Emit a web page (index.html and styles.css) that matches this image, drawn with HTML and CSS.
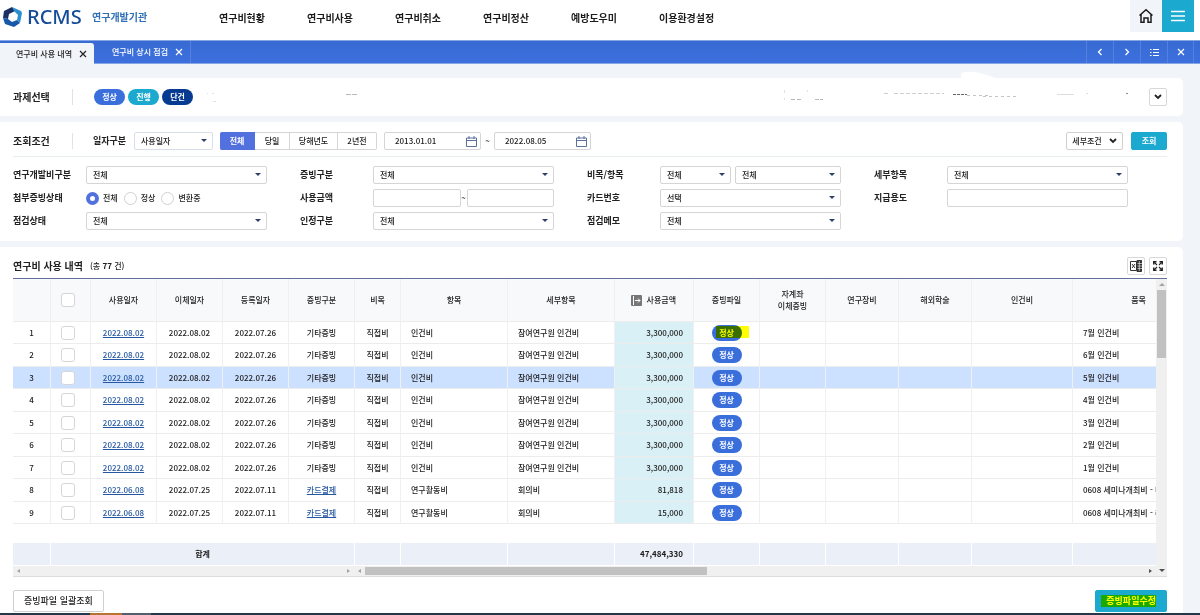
FILE: index.html
```html
<!DOCTYPE html>
<html lang="ko">
<head>
<meta charset="utf-8">
<meta name="viewport" content="width=device-width, initial-scale=1">
<title>RCMS 연구개발기관</title>
<link rel="stylesheet" href="styles.css">
</head>
<body>
<header class="top">
  <a class="brand" href="#">
    <svg class="brand-mark" width="20" height="20" viewBox="0 0 20 20" aria-hidden="true">
      <path fill="#1b2f63" d="M1 4 9 0 12 4 6 7 5 12 0 11z"/>
      <path fill="#2a8fd0" d="M9 0 18 4 19 6 17 16 14 13 15 8 11 4z"/>
      <path fill="#1758a8" d="M0 11 5 12 9 15 14 13 17 16 11 20 2 17z"/>
    </svg>
    <span class="brand-name">RCMS</span>
    <span class="brand-sub">연구개발기관</span>
  </a>
  <nav class="menu">
    <a href="#">연구비현황</a><a href="#">연구비사용</a><a href="#">연구비취소</a><a href="#">연구비정산</a><a href="#">예방도우미</a><a href="#">이용환경설정</a>
  </nav>
  <div class="top-buttons">
    <button class="top-btn" aria-label="홈"><svg width="16" height="16" viewBox="0 0 16 16" fill="none" stroke="#1c1c1c" stroke-width="1.5"><path d="M1.5 7.5 8 1.7l6.500 5.800M3 6.500V14.200h3V10h4v4.200h3V6.500"/></svg></button>
    <button class="top-btn top-btn-menu" aria-label="전체메뉴"><svg width="14" height="12" viewBox="0 0 14 12" stroke="#fff" stroke-width="1.300"><path d="M0 1.500h14M0 6h14M0 10.500h14"/></svg></button>
  </div>
</header>

<div class="tabs">
  <div class="tab tab-on"><a href="#">연구비 사용 내역</a><button aria-label="탭 닫기"><svg width="8" height="8" viewBox="0 0 8 8" stroke="currentColor" stroke-width="1.200"><path d="m1 1 6 6M7 1 1 7"/></svg></button></div>
  <div class="tab"><a href="#">연구비 상시 점검</a><button aria-label="탭 닫기"><svg width="8" height="8" viewBox="0 0 8 8" stroke="currentColor" stroke-width="1.200"><path d="m1 1 6 6M7 1 1 7"/></svg></button></div>
  <div class="tab-tools">
    <button aria-label="이전"><svg width="8" height="8" viewBox="0 0 8 8" fill="none" stroke="currentColor" stroke-width="1.300"><path d="M5.500 1 2.500 4l3 3"/></svg></button>
    <button aria-label="다음"><svg width="8" height="8" viewBox="0 0 8 8" fill="none" stroke="currentColor" stroke-width="1.300"><path d="m2.500 1 3 3-3 3"/></svg></button>
    <button aria-label="목록"><svg width="9" height="8" viewBox="0 0 9 8" stroke="currentColor"><path d="M0 1.500h1.500M0 4.500h1.500M0 7.500h1.500M3 1.500h6M3 4.500h6M3 7.500h6"/></svg></button>
    <button aria-label="모두 닫기"><svg width="8" height="8" viewBox="0 0 8 8" stroke="currentColor" stroke-width="1.200"><path d="m1 1 6 6M7 1 1 7"/></svg></button>
  </div>
</div>

<main class="page">
  <section class="card project">
    <h2 class="heading">과제선택</h2>
    <div class="pills"><span class="pill pill-lg">정상</span><span class="pill pill-lg pill-cyan">진행</span><span class="pill pill-lg pill-navy">단건</span></div>
    <div class="erased">
      <svg width="940" height="40" viewBox="200 77 940 40" fill="none" aria-hidden="true">
        <path fill="#fff" d="M961 80v-6c3-4 17-3 34 4v2z"/>
        <g stroke="#b9b9b9" stroke-width="1">
          <path stroke="#e2e2e2" d="M207 93.500h1m4 0h2M213 101.500h3M784.500 90v3m0 5v2M807.500 90v2"/>
          <path d="M346 94.500h11" stroke-dasharray="5 1"/>
          <path d="M791 99.500h4m2 0h5M815 99.500h8" stroke-dasharray="4 1"/>
          <path stroke="#cfcfcf" d="M884 93.500h6m4 0h50" stroke-dasharray="4 2"/>
          <path stroke="#666" d="M953 94.500h14" stroke-dasharray="3 1"/>
          <path stroke="#c5c5c5" d="M967 95.500h24m-8 1h36" stroke-dasharray="3 3"/>
          <path stroke="#dedede" d="M1057 94.500h17M1086 93.500h2"/>
          <path stroke="#888" d="M1126 93.500h2"/>
        </g>
      </svg>
    </div>
    <button class="icon-btn" aria-label="펼치기"><svg width="8" height="6" viewBox="0 0 8 6" fill="none" stroke="#222" stroke-width="1.800"><path d="m1 1 3 3 3-3"/></svg></button>
  </section>

  <section class="card search">
    <div class="search-head">
      <h2 class="heading">조회조건</h2>
      <label class="label" for="dateType">일자구분</label>
      <span class="select date-type"><select id="dateType"><option>사용일자</option></select></span>
      <div class="segment"><button class="on">전체</button><button>당일</button><button class="wide">당해년도</button><button class="last">2년전</button></div>
      <div class="range">
        <span class="date"><input type="text" value="2013.01.01" aria-label="시작일"><svg width="11" height="11" viewBox="0 0 11 11" fill="none" stroke="#5d7099"><path d="M.5 2h10v8.500H.5zM.5 4.500h10M3 0v3M8 0v3"/></svg></span>
        <span class="tilde">~</span>
        <span class="date"><input type="text" value="2022.08.05" aria-label="종료일"><svg width="11" height="11" viewBox="0 0 11 11" fill="none" stroke="#5d7099"><path d="M.5 2h10v8.500H.5zM.5 4.500h10M3 0v3M8 0v3"/></svg></span>
      </div>
      <div class="search-actions">
        <button class="btn detail">세부조건 <svg width="8" height="6" viewBox="0 0 8 6" fill="none" stroke="#222" stroke-width="1.800"><path d="m1 1 3 3 3-3"/></svg></button>
        <button class="btn btn-cyan query">조회</button>
      </div>
    </div>
    <div class="fields">
      <div class="field"><label class="label" for="f1">연구개발비구분</label><span class="select"><select id="f1"><option>전체</option></select></span></div>
      <div class="field"><label class="label" for="f2">증빙구분</label><span class="select"><select id="f2"><option>전체</option></select></span></div>
      <div class="field"><label class="label" for="f3">비목/항목</label><span class="select bimok"><select id="f3"><option>전체</option></select></span><span class="select"><select aria-label="항목"><option>전체</option></select></span></div>
      <div class="field"><label class="label" for="f4">세부항목</label><span class="select"><select id="f4"><option>전체</option></select></span></div>
      <div class="field" role="radiogroup" aria-labelledby="stLabel"><span class="label" id="stLabel">첨부증빙상태</span>
        <div class="radios"><label><input type="radio" name="st" checked>전체</label><label><input type="radio" name="st">정상</label><label><input type="radio" name="st">변환중</label></div></div>
      <div class="field"><label class="label" for="f5">사용금액</label><input class="text" id="f5" type="text"><span class="between">~</span><input class="text" type="text" aria-label="사용금액 최대"></div>
      <div class="field"><label class="label" for="f6">카드번호</label><span class="select"><select id="f6"><option>선택</option></select></span></div>
      <div class="field"><label class="label" for="f7">지급용도</label><input class="text" id="f7" type="text"></div>
      <div class="field"><label class="label" for="f8">점검상태</label><span class="select"><select id="f8"><option>전체</option></select></span></div>
      <div class="field"><label class="label" for="f9">인정구분</label><span class="select"><select id="f9"><option>전체</option></select></span></div>
      <div class="field"><label class="label" for="f10">점검메모</label><span class="select"><select id="f10"><option>전체</option></select></span></div>
    </div>
  </section>

  <section class="card list">
    <div class="list-head">
      <h2 class="list-title">연구비 사용 내역</h2>
      <span class="count">(총 <b>77</b> 건)</span>
      <div class="list-tools">
        <button class="icon-btn" aria-label="엑셀"><svg width="12" height="12" viewBox="0 0 12 12" fill="none" stroke="#333"><path d="M.5 1.500h6v9h-6zM2 4l3 4M5 4 2 8"/><path fill="#333" d="M7 .5h4.500v11H7z"/><path stroke="#fff" stroke-width=".6" d="M7.500 3.500H12M7.500 6H12M7.500 8.500H12M9.300 1v10"/></svg></button>
        <button class="icon-btn" aria-label="전체화면"><svg width="10" height="10" viewBox="0 0 10 10" fill="none" stroke="#222" stroke-width="1.500"><path d="M.8 3.500V.8h2.700M6.500.8h2.700v2.700M9.200 6.500v2.700H6.500M3.500 9.200H.8V6.500"/><path stroke-width="1.100" d="m1 1 3 3M9 1 6 4M9 9 6 6M1 9l3-3"/></svg></button>
      </div>
    </div>

    <div class="grid">
      <div class="grid-main">
        <div class="grid-view">
          <table>
            <colgroup><col class="c38"><col class="c40"><col class="c66"><col class="c66"><col class="c66"><col class="c66"><col class="c46"><col class="c107"><col class="c107"><col class="c79"><col class="c66"><col class="c66"><col class="c73"><col class="c73"><col class="c101"><col class="c132"></colgroup>
            <thead>
              <tr><th></th><th><input type="checkbox" aria-label="전체 선택"></th><th>사용일자</th><th>이체일자</th><th>등록일자</th><th>증빙구분</th><th>비목</th><th>항목</th><th>세부항목</th><th><span class="amount-head"><svg width="11" height="11" viewBox="0 0 11 11" fill="none"><rect width="11" height="11" rx="1" fill="#777"/><path stroke="#fff" d="M2.500 1v9M4 5.500h5M7 3.500l2 2-2 2"/></svg>사용금액</span></th><th>증빙파일</th><th>자계좌<br>이체증빙</th><th>연구장비</th><th>해외학술</th><th>인건비</th><th>품목</th></tr>
            </thead>
            <tbody>
              <tr><td>1</td><td><input type="checkbox" aria-label="1행 선택"></td><td><a href="#">2022.08.02</a></td><td>2022.08.02</td><td>2022.07.26</td><td>기타증빙</td><td>직접비</td><td class="l">인건비</td><td class="l">참여연구원 인건비</td><td class="amt">3,300,000</td><td><span class="pill marked">정상</span></td><td></td><td></td><td></td><td></td><td class="l">7월 인건비</td></tr>
              <tr><td>2</td><td><input type="checkbox" aria-label="2행 선택"></td><td><a href="#">2022.08.02</a></td><td>2022.08.02</td><td>2022.07.26</td><td>기타증빙</td><td>직접비</td><td class="l">인건비</td><td class="l">참여연구원 인건비</td><td class="amt">3,300,000</td><td><span class="pill">정상</span></td><td></td><td></td><td></td><td></td><td class="l">6월 인건비</td></tr>
              <tr class="selected"><td>3</td><td><input type="checkbox" aria-label="3행 선택"></td><td><a href="#">2022.08.02</a></td><td>2022.08.02</td><td>2022.07.26</td><td>기타증빙</td><td>직접비</td><td class="l">인건비</td><td class="l">참여연구원 인건비</td><td class="amt">3,300,000</td><td><span class="pill">정상</span></td><td></td><td></td><td></td><td></td><td class="l">5월 인건비</td></tr>
              <tr><td>4</td><td><input type="checkbox" aria-label="4행 선택"></td><td><a href="#">2022.08.02</a></td><td>2022.08.02</td><td>2022.07.26</td><td>기타증빙</td><td>직접비</td><td class="l">인건비</td><td class="l">참여연구원 인건비</td><td class="amt">3,300,000</td><td><span class="pill">정상</span></td><td></td><td></td><td></td><td></td><td class="l">4월 인건비</td></tr>
              <tr><td>5</td><td><input type="checkbox" aria-label="5행 선택"></td><td><a href="#">2022.08.02</a></td><td>2022.08.02</td><td>2022.07.26</td><td>기타증빙</td><td>직접비</td><td class="l">인건비</td><td class="l">참여연구원 인건비</td><td class="amt">3,300,000</td><td><span class="pill">정상</span></td><td></td><td></td><td></td><td></td><td class="l">3월 인건비</td></tr>
              <tr><td>6</td><td><input type="checkbox" aria-label="6행 선택"></td><td><a href="#">2022.08.02</a></td><td>2022.08.02</td><td>2022.07.26</td><td>기타증빙</td><td>직접비</td><td class="l">인건비</td><td class="l">참여연구원 인건비</td><td class="amt">3,300,000</td><td><span class="pill">정상</span></td><td></td><td></td><td></td><td></td><td class="l">2월 인건비</td></tr>
              <tr><td>7</td><td><input type="checkbox" aria-label="7행 선택"></td><td><a href="#">2022.08.02</a></td><td>2022.08.02</td><td>2022.07.26</td><td>기타증빙</td><td>직접비</td><td class="l">인건비</td><td class="l">참여연구원 인건비</td><td class="amt">3,300,000</td><td><span class="pill">정상</span></td><td></td><td></td><td></td><td></td><td class="l">1월 인건비</td></tr>
              <tr><td>8</td><td><input type="checkbox" aria-label="8행 선택"></td><td><a href="#">2022.06.08</a></td><td>2022.07.25</td><td>2022.07.11</td><td><a href="#">카드결제</a></td><td>직접비</td><td class="l">연구활동비</td><td class="l">회의비</td><td class="amt">81,818</td><td><span class="pill">정상</span></td><td></td><td></td><td></td><td></td><td class="l">0608 세미나개최비 - 비</td></tr>
              <tr><td>9</td><td><input type="checkbox" aria-label="9행 선택"></td><td><a href="#">2022.06.08</a></td><td>2022.07.25</td><td>2022.07.11</td><td><a href="#">카드결제</a></td><td>직접비</td><td class="l">연구활동비</td><td class="l">회의비</td><td class="amt">15,000</td><td><span class="pill">정상</span></td><td></td><td></td><td></td><td></td><td class="l">0608 세미나개최비 - 라</td></tr>
            </tbody>
            <tfoot>
              <tr class="spacer"><td colspan="16"></td></tr>
              <tr class="total"><td></td><td colspan="5">합계</td><td></td><td></td><td></td><td class="sum">47,484,330</td><td></td><td></td><td></td><td></td><td></td><td></td></tr>
            </tfoot>
          </table>
        </div>
        <div class="hbars">
          <div class="hbar hbar-fixed"><i class="arrow left"></i><i class="arrow right"></i></div>
          <div class="hbar"><i class="arrow left"></i><span class="hthumb"></span><i class="arrow right dark"></i></div>
        </div>
      </div>
      <div class="vbar"><i class="arrow up"></i><span class="vthumb"></span><i class="arrow down dark"></i></div>
    </div>

    <div class="actions">
      <button class="btn action">증빙파일 일괄조회</button>
      <button class="btn btn-cyan action"><span class="marked-text">증빙파일수정</span></button>
    </div>
  </section>
</main>
<div class="taskbar"><span class="task-orange"></span><span class="task-gray"></span></div>
</body>
</html>
```

FILE: styles.css
```css
* { box-sizing: border-box; }

body {
  margin: 0;
  min-height: 100vh;
  display: flex;
  flex-direction: column;
  overflow: hidden;
  background: #f1f5fa;
  color: #222;
  font: 500 8px/12px "Noto Sans CJK KR", sans-serif;
}

a { color: inherit; text-decoration: none; }
svg { display: block; flex: none; }
button, input, select { font: inherit; color: inherit; }
button {
  display: flex;
  align-items: center;
  justify-content: center;
  padding: 0;
  border: 0;
  background: none;
}

/* header */
.top { display: flex; height: 40px; background: #fff; }
.brand { display: flex; align-items: center; width: 219px; height: 34px; padding-left: 3px; }
.brand-name {
  width: 64px;
  padding-left: 4px;
  margin-right: 5px;
  color: #154c98;
  font: 500 20px/28px "Noto Sans", sans-serif;
}
.brand-sub { color: #2f6fb5; font-size: 10px; font-weight: 700; }
.menu { display: flex; gap: 42px; height: 36px; align-items: center; color: #1b1b1b; font-size: 10px; font-weight: 700; }
.top-buttons { display: flex; margin-left: auto; padding-right: 6px; }
.top-btn { width: 32px; height: 32px; background: #f1f5fa; }
.top-btn-menu { background: #1ba9cf; }

/* tabs */
.tabs {
  display: flex;
  align-items: flex-end;
  height: 24px;
  border-top: 1px solid #86a5e4;
  border-bottom: 1px solid #86a5e4;
  background: linear-gradient(#376bd2, #3d70de);
  color: #fff;
}
.tab {
  display: flex;
  align-items: center;
  justify-content: space-between;
  width: 97px;
  height: 22px;
  padding: 0 7px 0 18px;
  border-right: 1px solid #5580df;
}
.tab-on {
  width: 94px;
  height: 21px;
  padding: 0 7px 0 16px;
  margin-bottom: -1px;
  border: 0;
  border-radius: 0 3px 0 0;
  background: #f1f5fa;
  color: #222;
}
.tab-tools { display: flex; margin-left: auto; padding-right: 6px; }
.tab-tools button { width: 27px; height: 22px; border-left: 1px solid #5580df; }
.tab-tools button:last-child { border-right: 1px solid #5580df; }

/* cards */
.page { display: flex; flex-direction: column; gap: 6px; flex: 1; padding: 14px 17px 0 0; }
.card { padding: 0 16px 0 13px; border-radius: 0 5px 5px 0; background: #fff; }
.heading {
  width: 60px;
  margin: 0 20px 0 0;
  border-right: 1px solid #dfe3e8;
  color: #222;
  font-size: 10px;
  font-weight: 700;
  line-height: 16px;
}
.project { display: flex; align-items: center; height: 38px; }
.pills { display: flex; gap: 3px; padding-left: 1px; }
.erased { flex: 1; min-width: 0; height: 40px; margin-left: 7px; }
.erased svg { overflow: visible; }

.pill {
  position: relative;
  display: inline-block;
  width: 30px;
  border-radius: 8px;
  background: #3a6edb;
  color: #fff;
  font-weight: 700;
  line-height: 16px;
  text-align: center;
  vertical-align: middle;
}
.pill-lg { width: 31px; }
.pill-cyan { background: #1ba9cf; }
.pill-navy { background: #073b91; }
.marked::after {
  content: "";
  position: absolute;
  top: 1px;
  left: 4px;
  width: 33px;
  height: 12px;
  background: #ff0;
  mix-blend-mode: multiply;
}
.icon-btn { width: 18px; height: 18px; border: 1px solid #d8d8d8; border-radius: 2px; background: #fff; }

/* search */
.search { padding-bottom: 11px; }
.search-head { display: flex; align-items: center; height: 35px; padding-top: 4px; border-bottom: 1px solid #e8edf0; }
.label { color: #222; font-size: 9px; font-weight: 700; white-space: nowrap; }
.select { position: relative; display: flex; flex: 1; min-width: 0; }
.select::after {
  content: "";
  position: absolute;
  top: 7px;
  right: 6px;
  border: 3px solid transparent;
  border-top-color: #2c4069;
  border-bottom: 0;
}
.select select, .text, .date {
  width: 100%;
  min-width: 0;
  height: 18px;
  padding: 0 6px;
  border: 1px solid #d5d5d5;
  border-radius: 2px;
  background: #fff;
}
.select select { appearance: none; }
.search-head > .label { width: 34px; }
.date-type { flex: none; width: 79px; margin: 0 7px; }
.date-type select { border-color: #d7e0ea; }
.segment { display: flex; margin-right: 7px; }
.segment button { width: 35px; height: 18px; border: 1px solid #d5d5d5; border-left: 0; background: #fff; }
.segment .on { border-color: #5271df; border-radius: 2px 0 0 2px; background: #5271df; color: #fff; font-weight: 700; }
.segment .wide { width: 48px; }
.segment .last { width: 39px; border-radius: 0 2px 2px 0; }
.range { display: flex; align-items: center; }
.date { display: flex; align-items: center; width: 97px; padding: 0 3px 0 10px; }
.date input { flex: 1; min-width: 0; padding: 0; border: 0; outline: 0; background: none; }
.tilde { width: 13px; text-align: center; }
.search-actions { display: flex; gap: 8px; margin-left: auto; }
.btn { border: 1px solid #d0d0d0; border-radius: 2px; background: #fff; }
.btn-cyan { border-color: #1ba9cf; background: #1ba9cf; color: #fff; font-weight: 700; }
.detail { width: 57px; height: 18px; gap: 7px; }
.query { width: 36px; height: 18px; }
.fields {
  display: grid;
  grid-template-columns: repeat(4, minmax(0, 1fr));
  gap: 5px 33px;
  padding: 9px 39px 0 0;
}
.field { display: flex; align-items: center; height: 18px; }
.field .label { flex: none; width: 73px; }
.bimok { flex: none; width: 71px; margin-right: 4px; }
.between { flex: none; width: 6px; text-align: center; }
.radios { display: flex; gap: 6px; }
.radios label { display: flex; align-items: center; gap: 4px; }
.radios input {
  appearance: none;
  width: 13px;
  height: 13px;
  margin: 0;
  border: 1px solid #d0d0d0;
  border-radius: 50%;
  background: #fff;
}
.radios input:checked { border: 4px solid #5271df; }

/* list */
.list { flex: 1; padding-top: 10px; border-radius: 0 5px 0 0; }
.list-head { display: flex; align-items: center; height: 21px; padding-bottom: 3px; }
.list-title { margin: 0 7px 0 0; color: #222; font-size: 10px; line-height: 16px; }
.list-tools { display: flex; gap: 4px; margin-left: auto; }
.grid { display: flex; border-top: 1px solid #666f99; }
.grid-main { flex: 1; min-width: 0; }
.grid-view { overflow: hidden; }
table { table-layout: fixed; width: 1192px; border-spacing: 0; text-align: center; }
.c38 { width: 38px; }
.c40 { width: 40px; }
.c46 { width: 46px; }
.c66 { width: 66px; }
.c73 { width: 73px; }
.c79 { width: 79px; }
.c101 { width: 101px; }
.c107 { width: 107px; }
.c132 { width: 132px; }
th, td { padding: 0; border-right: 1px solid #f0f0f0; border-bottom: 1px solid #ececec; white-space: nowrap; }
th { height: 43px; background: #f8f9fb; font-weight: 500; }
td { height: 22px; line-height: 16px; }
tbody tr:nth-child(even) td { height: 23px; }
td a { color: #2558a0; text-decoration: underline; }
td.l { padding-left: 10px; text-align: left; }
td.amt, td.sum { padding-right: 10px; text-align: right; }
td.amt { background: #d9f0f6; }
.selected td:not(.amt) { background: #cce0ff; }
table input {
  appearance: none;
  display: block;
  width: 14px;
  height: 14px;
  margin: 0 0 0 10px;
  border: 1px solid #d6d6d6;
  border-radius: 3px;
  background: #fff;
}
.amount-head { display: flex; align-items: center; justify-content: flex-end; gap: 5px; padding-right: 17px; }
tfoot .spacer td { height: 19px; border: 0; }
tfoot .total td { border-right: 1px solid #fff; border-bottom: 0; background: #ebf0f8; font-weight: 700; }

.hbars { display: flex; padding-top: 1px; }
.hbar {
  display: flex;
  flex: 1;
  align-items: center;
  justify-content: space-between;
  height: 11px;
  padding: 0 4px;
  border-bottom: 1px solid #dcdcdc;
  background: #f0f0f0;
}
.hbar-fixed { flex: none; width: 341px; }
.hthumb { width: 342px; height: 8px; margin: 0 auto 0 4px; background: #c1c1c1; }
.vbar {
  display: flex;
  flex-direction: column;
  align-items: center;
  width: 11px;
  padding: 4px 0;
  border-bottom: 1px solid #dcdcdc;
  background: #f0f0f0;
}
.vthumb { width: 9px; height: 68px; margin: 4px 0 auto; background: #c1c1c1; }
.arrow { border: 0 solid transparent; }
.left { border-width: 2px 3px 2px 0; border-right-color: #a3a3a3; }
.right { border-width: 2px 0 2px 3px; border-left-color: #a3a3a3; }
.up { border-width: 0 3px 3px; border-bottom-color: #a3a3a3; }
.down { border-width: 3px 3px 0; border-top-color: #505050; }
.right.dark { border-left-color: #505050; }

.actions { display: flex; justify-content: space-between; padding: 13px 0 1px; }
.action { height: 22px; padding: 0 10px; font-size: 9px; }
.marked-text { position: relative; }
.marked-text::after {
  content: "";
  position: absolute;
  inset: 0 0 0 -5px;
  background: #ff0;
  mix-blend-mode: multiply;
}

.taskbar { display: flex; height: 2px; padding-left: 90px; background: #22384b; }
.task-orange { width: 32px; background: #b87333; }
.task-gray { width: 29px; background: #51606e; }
```
